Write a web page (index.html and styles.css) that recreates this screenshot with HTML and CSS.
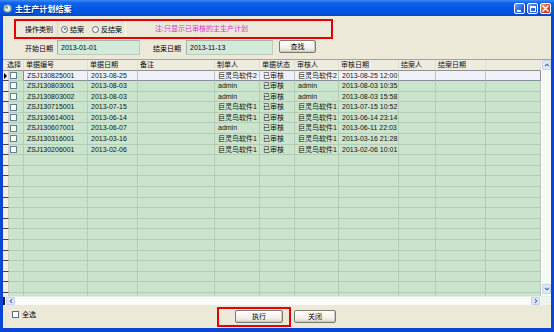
FILE: index.html
```html
<!DOCTYPE html>
<html lang="zh-CN">
<head>
<meta charset="utf-8">
<title>主生产计划结案</title>
<link rel="stylesheet" href="styles.css">
</head>
<body>
<div class="window">
  <div class="titlebar">
    <svg class="tb-icon" viewBox="0 0 10 10" width="9" height="9">
      <circle cx="5" cy="5" r="4.5" fill="#9fb7a0"/>
      <circle cx="5" cy="5" r="3" fill="#e8efe6"/>
      <circle cx="4" cy="4" r="1.4" fill="#5f9a63"/>
    </svg>
    <div class="tb-title">主生产计划结案</div>
    <div class="tb-btns">
      <div class="tb-btn min"><span class="min-bar"></span></div>
      <div class="tb-btn max"><span class="max-box"></span></div>
      <div class="tb-btn close">
        <svg viewBox="0 0 9 9" width="9" height="9"><path d="M2 2 L7 7 M7 2 L2 7" stroke="#fff" stroke-width="1.6" stroke-linecap="round"/></svg>
      </div>
    </div>
  </div>

  <div class="client">
    <div class="opbox">
      <span class="lbl">操作类别</span>
      <div class="radiogroup">
        <span class="radio checked"></span><span class="rtext">结案</span>
        <span class="radio second"></span><span class="rtext">反结案</span>
      </div>
      <span class="note">注:只显示已审核的主生产计划</span>
    </div>

    <div class="daterow">
      <span class="lbl">开始日期</span>
      <div class="input in1">2013-01-01</div>
      <span class="lbl lbl2">结束日期</span>
      <div class="input in2">2013-11-13</div>
      <button class="btn find">查找</button>
    </div>

    <div class="grid">
      <div class="grid-main">
        <div class="table">
          <div class="row head">
            <div class="c hsel">选择</div>
            <div class="c">单据编号</div>
            <div class="c">单据日期</div>
            <div class="c">备注</div>
            <div class="c">制单人</div>
            <div class="c">单据状态</div>
            <div class="c">审核人</div>
            <div class="c">审核日期</div>
            <div class="c">结案人</div>
            <div class="c">结案日期</div>
            <div class="c"></div>
          </div>

          <div class="row sel">
            <div class="rh"><span class="cur"></span></div>
            <div class="c cb"><span class="chk"></span></div>
            <div class="c s first">ZSJ130825001</div>
            <div class="c s">2013-08-25</div>
            <div class="c s"></div>
            <div class="c s">巨灵鸟软件2</div>
            <div class="c s">已审核</div>
            <div class="c s">巨灵鸟软件2</div>
            <div class="c s">2013-08-25 12:00</div>
            <div class="c s"></div>
            <div class="c s"></div>
            <div class="c s last"></div>
          </div>
          <div class="row">
            <div class="rh"></div><div class="c cb"><span class="chk"></span></div>
            <div class="c">ZSJ130803001</div><div class="c">2013-08-03</div><div class="c"></div>
            <div class="c">admin</div><div class="c">已审核</div><div class="c">admin</div>
            <div class="c">2013-08-03 10:35</div><div class="c"></div><div class="c"></div><div class="c"></div>
          </div>
          <div class="row">
            <div class="rh"></div><div class="c cb"><span class="chk"></span></div>
            <div class="c">ZSJ130803002</div><div class="c">2013-08-03</div><div class="c"></div>
            <div class="c">admin</div><div class="c">已审核</div><div class="c">admin</div>
            <div class="c">2013-08-03 15:58</div><div class="c"></div><div class="c"></div><div class="c"></div>
          </div>
          <div class="row">
            <div class="rh"></div><div class="c cb"><span class="chk"></span></div>
            <div class="c">ZSJ130715001</div><div class="c">2013-07-15</div><div class="c"></div>
            <div class="c">巨灵鸟软件1</div><div class="c">已审核</div><div class="c">巨灵鸟软件1</div>
            <div class="c">2013-07-15 10:52</div><div class="c"></div><div class="c"></div><div class="c"></div>
          </div>
          <div class="row">
            <div class="rh"></div><div class="c cb"><span class="chk"></span></div>
            <div class="c">ZSJ130614001</div><div class="c">2013-06-14</div><div class="c"></div>
            <div class="c">巨灵鸟软件1</div><div class="c">已审核</div><div class="c">巨灵鸟软件1</div>
            <div class="c">2013-06-14 23:14</div><div class="c"></div><div class="c"></div><div class="c"></div>
          </div>
          <div class="row">
            <div class="rh"></div><div class="c cb"><span class="chk"></span></div>
            <div class="c">ZSJ130607001</div><div class="c">2013-06-07</div><div class="c"></div>
            <div class="c">admin</div><div class="c">已审核</div><div class="c">巨灵鸟软件1</div>
            <div class="c">2013-06-11 22:03</div><div class="c"></div><div class="c"></div><div class="c"></div>
          </div>
          <div class="row">
            <div class="rh"></div><div class="c cb"><span class="chk"></span></div>
            <div class="c">ZSJ130316001</div><div class="c">2013-03-16</div><div class="c"></div>
            <div class="c">巨灵鸟软件1</div><div class="c">已审核</div><div class="c">巨灵鸟软件1</div>
            <div class="c">2013-03-16 21:28</div><div class="c"></div><div class="c"></div><div class="c"></div>
          </div>
          <div class="row">
            <div class="rh"></div><div class="c cb"><span class="chk"></span></div>
            <div class="c">ZSJ130206001</div><div class="c">2013-02-06</div><div class="c"></div>
            <div class="c">巨灵鸟软件1</div><div class="c">已审核</div><div class="c">巨灵鸟软件1</div>
            <div class="c">2013-02-06 10:01</div><div class="c"></div><div class="c"></div><div class="c"></div>
          </div>

          <div class="row"><div class="rh"></div><div class="c"></div><div class="c"></div><div class="c"></div><div class="c"></div><div class="c"></div><div class="c"></div><div class="c"></div><div class="c"></div><div class="c"></div><div class="c"></div><div class="c"></div></div>
          <div class="row"><div class="rh"></div><div class="c"></div><div class="c"></div><div class="c"></div><div class="c"></div><div class="c"></div><div class="c"></div><div class="c"></div><div class="c"></div><div class="c"></div><div class="c"></div><div class="c"></div></div>
          <div class="row"><div class="rh"></div><div class="c"></div><div class="c"></div><div class="c"></div><div class="c"></div><div class="c"></div><div class="c"></div><div class="c"></div><div class="c"></div><div class="c"></div><div class="c"></div><div class="c"></div></div>
          <div class="row"><div class="rh"></div><div class="c"></div><div class="c"></div><div class="c"></div><div class="c"></div><div class="c"></div><div class="c"></div><div class="c"></div><div class="c"></div><div class="c"></div><div class="c"></div><div class="c"></div></div>
          <div class="row"><div class="rh"></div><div class="c"></div><div class="c"></div><div class="c"></div><div class="c"></div><div class="c"></div><div class="c"></div><div class="c"></div><div class="c"></div><div class="c"></div><div class="c"></div><div class="c"></div></div>
          <div class="row"><div class="rh"></div><div class="c"></div><div class="c"></div><div class="c"></div><div class="c"></div><div class="c"></div><div class="c"></div><div class="c"></div><div class="c"></div><div class="c"></div><div class="c"></div><div class="c"></div></div>
          <div class="row"><div class="rh"></div><div class="c"></div><div class="c"></div><div class="c"></div><div class="c"></div><div class="c"></div><div class="c"></div><div class="c"></div><div class="c"></div><div class="c"></div><div class="c"></div><div class="c"></div></div>
          <div class="row"><div class="rh"></div><div class="c"></div><div class="c"></div><div class="c"></div><div class="c"></div><div class="c"></div><div class="c"></div><div class="c"></div><div class="c"></div><div class="c"></div><div class="c"></div><div class="c"></div></div>
          <div class="row"><div class="rh"></div><div class="c"></div><div class="c"></div><div class="c"></div><div class="c"></div><div class="c"></div><div class="c"></div><div class="c"></div><div class="c"></div><div class="c"></div><div class="c"></div><div class="c"></div></div>
          <div class="row"><div class="rh"></div><div class="c"></div><div class="c"></div><div class="c"></div><div class="c"></div><div class="c"></div><div class="c"></div><div class="c"></div><div class="c"></div><div class="c"></div><div class="c"></div><div class="c"></div></div>
          <div class="row"><div class="rh"></div><div class="c"></div><div class="c"></div><div class="c"></div><div class="c"></div><div class="c"></div><div class="c"></div><div class="c"></div><div class="c"></div><div class="c"></div><div class="c"></div><div class="c"></div></div>
          <div class="row"><div class="rh"></div><div class="c"></div><div class="c"></div><div class="c"></div><div class="c"></div><div class="c"></div><div class="c"></div><div class="c"></div><div class="c"></div><div class="c"></div><div class="c"></div><div class="c"></div></div>
          <div class="row"><div class="rh"></div><div class="c"></div><div class="c"></div><div class="c"></div><div class="c"></div><div class="c"></div><div class="c"></div><div class="c"></div><div class="c"></div><div class="c"></div><div class="c"></div><div class="c"></div></div>
          <div class="row"><div class="rh"></div><div class="c"></div><div class="c"></div><div class="c"></div><div class="c"></div><div class="c"></div><div class="c"></div><div class="c"></div><div class="c"></div><div class="c"></div><div class="c"></div><div class="c"></div></div>
        </div>
        <div class="vscroll">
          <div class="sbtn up"><svg viewBox="0 0 7 5" width="6" height="4"><path d="M1 4 L3.5 1.5 L6 4" fill="none" stroke="#4a5f90" stroke-width="1.3"/></svg></div>
          <div class="strack"></div>
          <div class="sbtn down"><svg viewBox="0 0 7 5" width="6" height="4"><path d="M1 1 L3.5 3.5 L6 1" fill="none" stroke="#4a5f90" stroke-width="1.3"/></svg></div>
        </div>
      </div>
      <div class="hscroll">
        <span class="hmark"></span>
        <div class="sbtn left"><svg viewBox="0 0 5 7" width="4" height="6"><path d="M4 1 L1.5 3.5 L4 6" fill="none" stroke="#4a5f90" stroke-width="1.3"/></svg></div>
        <div class="htrack"></div>
        <div class="sbtn right"><svg viewBox="0 0 5 7" width="4" height="6"><path d="M1 1 L3.5 3.5 L1 6" fill="none" stroke="#4a5f90" stroke-width="1.3"/></svg></div>
        <div class="corner"></div>
      </div>
    </div>

    <div class="footer">
      <div class="selall"><span class="chk"></span><span class="sa-text">全选</span></div>
      <div class="runbox"><button class="btn run">执行</button></div>
      <button class="btn closebtn">关闭</button>
    </div>
  </div>
</div>
</body>
</html>
```

FILE: styles.css
```css
* { box-sizing: border-box; margin: 0; padding: 0; }
html, body { width: 554px; height: 332px; overflow: hidden; }
body {
  font-family: "Liberation Sans", "Noto Sans CJK SC", sans-serif;
  font-size: 7px;
  color: #000;
  background: #fff;
}

.window {
  width: 554px;
  height: 332px;
  display: flex;
  flex-direction: column;
  background: #0A45D6;
}

/* title bar */
.titlebar {
  height: 16px;
  display: flex;
  align-items: center;
  padding: 0 3px 0 3px;
  background: linear-gradient(#3d8df8 0%, #0f62ec 18%, #0457e4 50%, #0252df 85%, #0647c6 100%);
  color: #fff;
}
.tb-icon { margin-right: 3px; flex: none; }
.tb-title {
  flex: 1;
  font-family: "Noto Sans CJK SC", sans-serif;
  font-weight: bold;
  font-size: 8px;
  letter-spacing: 0.1px;
  text-shadow: 1px 1px 0 #0a2a8a;
}
.tb-btns { display: flex; gap: 2px; padding-top: 1px; }
.tb-btn {
  width: 11px;
  height: 11px;
  border: 1px solid #fff;
  border-radius: 2px;
  background: linear-gradient(135deg, #6aa0fc, #2566ea 60%, #1b55d8);
  display: flex;
  align-items: center;
  justify-content: center;
  position: relative;
}
.tb-btn.close { background: linear-gradient(135deg, #f09a7a, #e0471f 55%, #c8381a); }
.min-bar { width: 4px; height: 2px; background: #fff; margin-top: 4px; margin-right: 2px; }
.max-box { width: 6px; height: 6px; border: 1px solid #fff; border-top-width: 2px; }

/* client area */
.client {
  flex: 1;
  margin: 0 3px 4px 3px;
  background: #ECE9D8;
  display: flex;
  flex-direction: column;
}

.lbl { font-family: "Noto Sans CJK SC", sans-serif; }

.opbox {
  margin: 3px 0 0 11px;
  width: 319px;
  height: 20px;
  border: 2px solid #e60000;
  display: flex;
  align-items: center;
  padding-left: 9px;
}
.radiogroup {
  margin-left: 4px;
  width: 69px;
  height: 14px;
  display: flex;
  align-items: center;
  padding-left: 3px;
  border-right: 1px solid #ffffff;
  border-left: 1px solid #d8d4c4;
}
.radio {
  width: 7px;
  height: 7px;
  border-radius: 50%;
  border: 1px solid #4b6a8e;
  background: #fff;
  display: inline-block;
  position: relative;
}
.radio.checked::after {
  content: "";
  position: absolute;
  left: 1.5px;
  top: 1.5px;
  width: 2px;
  height: 2px;
  border-radius: 50%;
  background: #2f9a2f;
}
.radio.second { margin-left: 8px; }
.rtext { margin-left: 2px; font-family: "Noto Sans CJK SC", sans-serif; }
.note {
  margin-left: 29px;
  margin-top: -3px;
  color: #e02ed6;
  font-family: "Noto Sans CJK SC", sans-serif;
}

.daterow {
  margin-top: 1px;
  height: 15px;
  display: flex;
  align-items: center;
  padding-left: 22px;
}
.input {
  height: 15px;
  background: #d3e9d9;
  border: 1px solid #b9cdbe;
  border-top-color: #a3b5a7;
  border-left-color: #a3b5a7;
  padding-left: 3px;
  line-height: 13px;
}
.in1 { margin-left: 4px; width: 83px; }
.lbl2 { margin-left: 13px; }
.in2 { margin-left: 5px; width: 87px; }

.btn {
  font-family: "Noto Sans CJK SC", sans-serif;
  font-size: 7px;
  color: #000;
  border: 1px solid #7b7b75;
  border-radius: 2px;
  background: linear-gradient(#ffffff, #f3f2ec 60%, #dcd9cc);
  box-shadow: inset -1px -1px 0 #cfcabb;
  height: 13px;
  line-height: 11px;
  text-align: center;
}
.find { margin-left: 6px; width: 37px; align-self: flex-start; margin-top: 0; }

/* grid */
.grid {
  margin-top: 4px;
  height: 246px;
  display: flex;
  flex-direction: column;
  border-top: 1px solid #a5a49c;
  background: #fbfbf8;
}
.grid-main { flex: 1; display: flex; min-height: 0; }
.table { flex: 1; overflow: hidden; background: #cae5cc; }

.row {
  display: grid;
  grid-template-columns: 6px 15px 64px 50px 77px 45px 35px 44px 60px 37px 50px 1fr;
  height: 10.6px;
}
.row.head {
  grid-template-columns: 21px 64px 50px 77px 45px 35px 44px 60px 37px 50px 1fr;
  height: 10.5px;
  background: #eeebdf;
}
.c {
  border-right: 1px solid #b6cbb7;
  border-bottom: 1px solid #b6cbb7;
  padding-left: 3px;
  white-space: nowrap;
  overflow: hidden;
  line-height: 9.6px;
  color: #111;
}
.head .c {
  border-right: 1px solid #e2dfd2;
  border-bottom: 1px solid #8f8e88;
  padding-left: 2px;
  font-family: "Noto Sans CJK SC", sans-serif;
  line-height: 9.5px;
}
.head .hsel { padding-left: 4px; }
.rh {
  background: #f6eee4;
  border-right: 1px solid #d6d0c2;
  border-bottom: 1px solid #444;
  position: relative;
}
.cur {
  position: absolute;
  left: 1px;
  top: 2px;
  width: 0;
  height: 0;
  border-top: 3px solid transparent;
  border-bottom: 3px solid transparent;
  border-left: 3px solid #000;
}
.c.cb { padding-left: 1px; display: flex; align-items: center; }
.chk {
  width: 7px;
  height: 7px;
  background: #fff;
  border: 1px solid #5f7f99;
  display: inline-block;
}
.row.sel .cb { border-right-color: #8a8aa0; }
.row.sel .s {
  background: #f1f1fb;
  border-bottom-color: #8a8aa0;
}
.row.sel .last { border-right-color: #8a8aa0; }

.vscroll {
  width: 10px;
  display: flex;
  flex-direction: column;
  background: #f8f8f6;
  border-left: 1px solid #ffffff;
}
.strack { flex: 1; }
.sbtn {
  display: flex;
  align-items: center;
  justify-content: center;
  background: #dfe8fb;
  border: 1px solid #c4d2f2;
  border-radius: 1px;
}
.vscroll .sbtn { height: 10px; }
.vscroll .down { margin-bottom: 2px; }

.hscroll {
  height: 9px;
  display: flex;
  align-items: stretch;
  background: #fbfbfa;
  border-top: 1px solid #e7ece7;
}
.hmark { width: 2px; background: #222; margin-right: 1px; }
.hscroll .sbtn { width: 9px; }
.htrack { flex: 1; }
.hscroll .right { margin-right: 1px; }
.corner { width: 10px; background: #eef3ee; }

/* footer */
.footer {
  flex: 1;
  display: flex;
  align-items: flex-start;
}
.selall {
  margin-left: 9px;
  margin-top: 4px;
  width: 205px;
  display: flex;
  align-items: center;
}
.selall .chk { border-color: #5b6f84; }
.sa-text { margin-left: 3px; font-family: "Noto Sans CJK SC", sans-serif; }
.runbox {
  margin-top: 2px;
  width: 74px;
  height: 20px;
  border: 2px solid #e60000;
  padding: 1px 0 0 16px;
}
.run { width: 48px; }
.closebtn { margin-left: 3px; margin-top: 5px; width: 42px; }
```
